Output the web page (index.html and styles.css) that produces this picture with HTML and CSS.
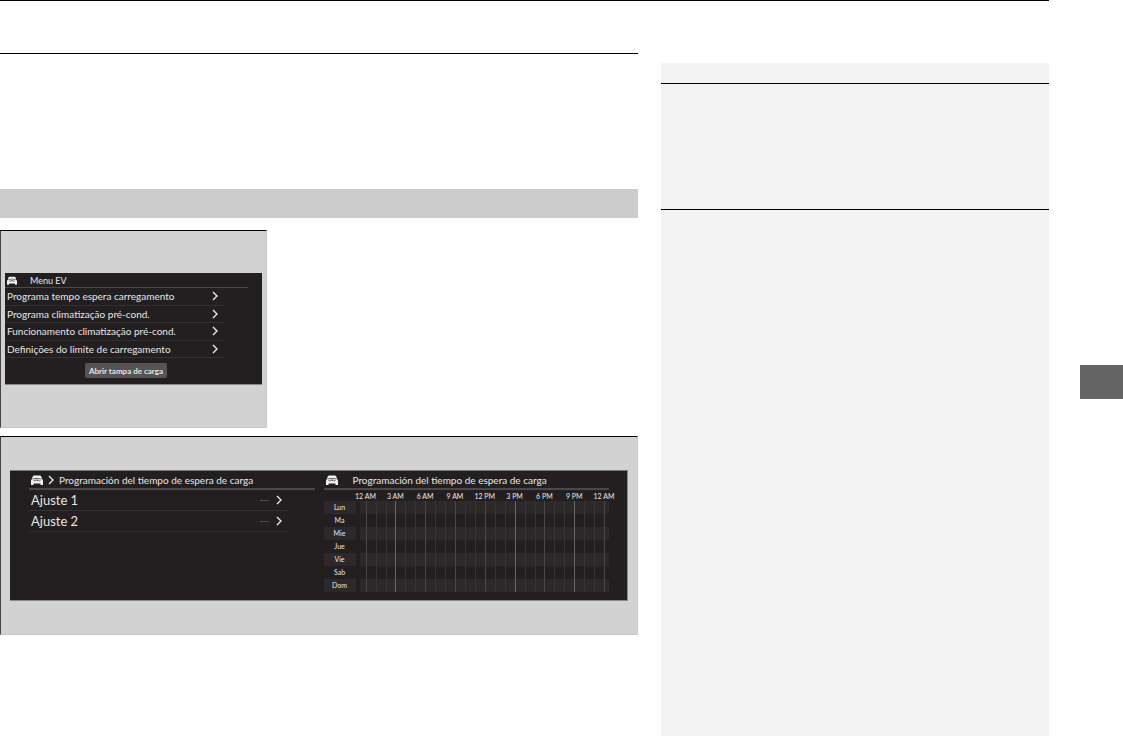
FILE: index.html
```
<!DOCTYPE html>
<html lang="pt">
<head>
    <meta charset="UTF-8">
    <meta name="viewport" content="width=device-width, initial-scale=1.0">
    <title>Menu EV</title>
    <link rel="stylesheet" href="styles.css">
</head>
<body>
    <!-- Shared icons -->
    <svg class="icon-defs" aria-hidden="true">
        <symbol id="icon-car" viewBox="0 0 24 20">
            <path fill="#f4f4f4" d="M6 1h12q2 0 3 3l1 4q2 1 2 4v7q0 1-1 1h-3q-1 0-1-1v-2H5v2q0 1-1 1H1q-1 0-1-1v-7q0-3 2-4l1-4q1-3 3-3z"/>
            <path fill="none" stroke="#231f20" stroke-width="1.4" d="M3 8q9-3 18 0M5 11l4 1M19 11l-4 1M10 9v3M12 9l1 3 1-3"/>
        </symbol>
        <symbol id="icon-next" viewBox="0 0 6 10">
            <path fill="none" stroke="#e8e8e8" stroke-width="1.4" d="M1 1l4 4-4 4"/>
        </symbol>
    </svg>

    <div class="page">
        <main class="content">
            <div class="intro"></div>
            <div class="section-bar"></div>

            <!-- EV menu -->
            <section class="figure figure-menu">
                <div class="screen menu-screen">
                    <header class="menu-header">
                        <svg class="car-small"><use href="#icon-car"/></svg>
                        <h2>Menu EV</h2>
                    </header>
                    <div class="menu-list">
                        <button class="row">Programa tempo espera carregamento<svg class="next"><use href="#icon-next"/></svg></button>
                        <button class="row">Programa climatização pré-cond.<svg class="next"><use href="#icon-next"/></svg></button>
                        <button class="row">Funcionamento climatização pré-cond.<svg class="next"><use href="#icon-next"/></svg></button>
                        <button class="row">Definições do limite de carregamento<svg class="next"><use href="#icon-next"/></svg></button>
                    </div>
                    <button class="open-btn">Abrir tampa de carga</button>
                </div>
            </section>

            <!-- Charging schedule -->
            <section class="figure figure-schedule" lang="es">
                <div class="screen schedule-screen">
                    <div class="panel">
                        <header class="panel-header">
                            <svg class="car"><use href="#icon-car"/></svg>
                            <svg class="next"><use href="#icon-next"/></svg>
                            <h2>Programación del tiempo de espera de carga</h2>
                        </header>
                        <div class="settings">
                            <button class="row">Ajuste 1<span class="value">---</span><svg class="next"><use href="#icon-next"/></svg></button>
                            <button class="row">Ajuste 2<span class="value">---</span><svg class="next"><use href="#icon-next"/></svg></button>
                        </div>
                    </div>
                    <div class="panel">
                        <header class="panel-header chart-header">
                            <svg class="car"><use href="#icon-car"/></svg>
                            <h2>Programación del tiempo de espera de carga</h2>
                        </header>
                        <div class="axis">
                            <span>12 AM</span>
                            <span>3 AM</span>
                            <span>6 AM</span>
                            <span>9 AM</span>
                            <span>12 PM</span>
                            <span>3 PM</span>
                            <span>6 PM</span>
                            <span>9 PM</span>
                            <span>12 AM</span>
                        </div>
                        <table class="week">
                            <tbody id="weekRows"></tbody>
                        </table>
                    </div>
                </div>
            </section>
        </main>

        <aside class="notes">
            <div class="notes-title"></div>
            <div class="notes-block"></div>
            <div class="notes-rest"></div>
        </aside>
    </div>
    <div class="rail">
        <div class="chapter-tab"></div>
    </div>

    <script>
        const days = ["Lun", "Ma", "Mie", "Jue", "Vie", "Sab", "Dom"];
        const weekRows = document.getElementById("weekRows");

        // One row per day, one cell per three hours
        days.forEach(day => {
            const row = document.createElement("tr");
            row.innerHTML = `<th scope="row">${day}</th><td class="edge"></td>`
                + '<td class="slot"></td>'.repeat(8)
                + '<td class="edge-end"></td>';
            weekRows.appendChild(row);
        });
    </script>
</body>
</html>
```
FILE: styles.css
```
* {
    box-sizing: border-box;
}
body {
    margin: 0;
    min-height: 100vh;
    display: flex;
    gap: 31px;
    background: #fff;
    font-family: Lato, "Liberation Sans", sans-serif;
    color: #e6e6e6;
}
h2 {
    margin: 0;
    font-weight: 400;
}
button {
    margin: 0;
    padding: 0;
    border: none;
    background: none;
    color: inherit;
    font-family: inherit;
    text-align: left;
    cursor: pointer;
}
svg {
    display: block;
    flex-shrink: 0;
}
.icon-defs {
    position: absolute;
    width: 0;
    height: 0;
}

/* Page frame */
.page {
    flex: 1;
    min-width: 0;
    display: flex;
    gap: 23px;
    border-top: 1px solid #000;
}
.content {
    flex: 638;
    min-width: 0;
    padding-top: 52px;
}
.intro {
    height: 136px;
    border-top: 1px solid #000;
}
.section-bar {
    height: 29px;
    margin-bottom: 12px;
    background: #ccc;
}
.notes {
    flex: 388;
    min-width: 0;
    margin-top: 62px;
    background: #f3f3f3;
}
.notes-title {
    height: 20px;
}
.notes-block {
    height: 126px;
    border-top: 1px solid #000;
}
.notes-rest {
    border-top: 1px solid #000;
}
.rail {
    width: 43px;
    padding-top: 365px;
}
.chapter-tab {
    height: 34px;
    background: #646464;
}

/* Figures */
.figure {
    background: #d2d2d2;
    border-top: 1px solid #000;
    border-left: 1px solid #444;
    border-right: 1px solid #c8c8c8;
    border-bottom: 1px solid #c8c8c8;
}
.figure-menu {
    width: 267px;
    height: 198px;
    margin-bottom: 8px;
    padding: 42px 4px 0;
}
.figure-schedule {
    height: 199px;
    padding: 33px 9px 0;
}
.screen {
    background: #231f20;
    border-bottom: 1px solid #8a8889;
}
.next {
    width: 6px;
    height: 10px;
}
.row {
    display: flex;
    align-items: center;
    border-bottom: 1px solid #333031;
    white-space: nowrap;
}
.row .next {
    margin-left: auto;
}

/* EV menu */
.menu-screen {
    height: 112px;
}
.menu-header {
    display: flex;
    align-items: center;
    gap: 13px;
    height: 15px;
    margin-right: 14px;
    padding-left: 2px;
    border-bottom: 1px solid #4a4748;
}
.menu-header h2 {
    font-size: 9px;
}
.car-small {
    width: 10px;
    height: 9px;
}
.menu-list {
    display: grid;
    grid-auto-rows: 1fr;
    height: 70px;
    margin-right: 38px;
}
.menu-list .row {
    padding: 0 6px 0 2px;
    font-size: 10px;
}
.open-btn {
    display: block;
    height: 15px;
    margin: 5px 0 0 80px;
    padding: 0 4px;
    border-radius: 2px;
    background: #555354;
    font-size: 8px;
    font-weight: 700;
}

/* Charging schedule */
.schedule-screen {
    display: flex;
    gap: 9px;
    height: 131px;
    padding: 0 18px 0 19px;
    border-top: 1px solid #777;
    border-right: 1px solid #8a8889;
}
.panel {
    flex: 1;
    min-width: 0;
}
.panel-header {
    display: flex;
    align-items: center;
    gap: 5px;
    height: 19px;
    padding-left: 2px;
    border-bottom: 2px solid #4a4849;
    white-space: nowrap;
}
.panel-header h2 {
    font-size: 10px;
}
.chart-header {
    gap: 15px;
}
.car {
    width: 12px;
    height: 10px;
}
.settings {
    display: grid;
    grid-auto-rows: 21px;
    margin-right: 27px;
}
.settings .row {
    padding: 0 6px 0 2px;
    font-size: 13px;
}
.settings .value {
    margin-left: auto;
    color: #8a8889;
    font-size: 8px;
}
.settings .next {
    margin-left: 7px;
}

/* Week chart */
.axis {
    display: flex;
    justify-content: space-between;
    height: 11px;
    padding: 0 5px 0 42px;
    font-size: 7px;
    line-height: 12px;
}
.axis span {
    display: flex;
    justify-content: center;
    width: 0;
    white-space: nowrap;
}
.week {
    width: 100%;
    table-layout: fixed;
    border-collapse: separate;
    border-spacing: 0;
}
.week th,
.week td {
    height: 13px;
    padding: 0;
}
.week th {
    width: 32px;
    font-size: 7px;
    font-weight: 400;
    line-height: 13px;
    text-align: center;
}
.week .edge {
    width: 10px;
    border-left: 4px solid #231f20;
}
.week .edge-end {
    width: 5px;
    background-image: linear-gradient(90deg, #4a4748 1px, transparent 1px);
}
.week tr:nth-child(odd) th,
.week tr:nth-child(odd) td {
    background-color: #2d292a;
}
.week .slot {
    background-image: linear-gradient(90deg, #4a4748 1px, transparent 1px), linear-gradient(90deg, #363334 1px, transparent 1px);
    background-size: 100% 100%, 10px 100%;
}
.week .slot:nth-child(4),
.week .slot:nth-child(8),
.week .slot:nth-child(10) {
    background-image: linear-gradient(90deg, #676465 1px, transparent 1px), linear-gradient(90deg, #363334 1px, transparent 1px);
}
```
